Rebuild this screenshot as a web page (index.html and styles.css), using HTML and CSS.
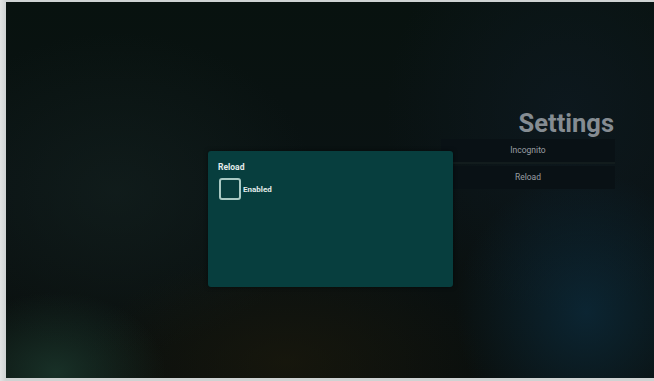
FILE: index.html
```html
<!DOCTYPE html>
<html>
<head>
<meta charset="utf-8">
<link rel="stylesheet" href="styles.css">
</head>
<body>
<div class="frame">
  <div class="screen">
    <div class="settings">
      <div class="title">Settings</div>
      <div class="row first">Incognito</div>
      <div class="row">Reload</div>
    </div>
    <div class="dialog">
      <div class="dlg-title">Reload</div>
      <label class="option">
        <span class="check"></span>
        <span class="opt-label">Enabled</span>
      </label>
    </div>
  </div>
</div>
</body>
</html>
```
FILE: styles.css
```css
html, body {
  margin: 0;
  padding: 0;
  width: 654px;
  height: 381px;
  overflow: hidden;
  background: #d9dcdc;
  font-family: Roboto, "Liberation Sans", sans-serif;
}
.frame {
  width: 654px;
  height: 381px;
  box-sizing: border-box;
  padding: 2px 0 3px 6px;
  background: linear-gradient(90deg, #e2e4e4 0, #cfd3d3 6px);
}
.screen {
  position: relative;
  width: 648px;
  height: 376px;
  display: flex;
  justify-content: flex-end;
  background:
    radial-gradient(ellipse 110px 80px at 50px 370px, rgba(30,62,50,0.7), rgba(30,62,50,0) 100%),
    radial-gradient(ellipse 130px 140px at 580px 310px, rgba(12,44,62,0.75), rgba(12,44,62,0) 100%),
    radial-gradient(ellipse 200px 110px at 280px 360px, rgba(32,28,12,0.55), rgba(32,28,12,0) 100%),
    radial-gradient(ellipse 200px 160px at 110px 190px, rgba(20,34,32,0.6), rgba(20,34,32,0) 100%),
    radial-gradient(ellipse 180px 200px at 560px 110px, rgba(14,26,34,0.75), rgba(14,26,34,0) 100%),
    linear-gradient(180deg, #08120f 0%, #0a1213 50%, #0a0f0d 100%);
}
.settings {
  width: 174px;
  margin-right: 39px;
  padding-top: 107px;
  display: flex;
  flex-direction: column;
}
.title {
  text-align: right;
  font-size: 25.5px;
  font-weight: 700;
  color: #858c92;
  line-height: 29px;
  margin-right: 1px;
  margin-bottom: 1px;
}
.row {
  height: 23px;
  line-height: 23px;
  text-align: center;
  font-size: 8.5px;
  color: #9a9fa2;
  background: #091115;
}
.row.first {
  border-bottom: 2px solid #121c1d;
  margin-bottom: 2px;
}
.dialog {
  position: absolute;
  left: 202px;
  top: 149px;
  width: 245px;
  height: 136px;
  box-sizing: border-box;
  padding: 11px 10px;
  background: #073e3e;
  border-radius: 3px;
  box-shadow: 0 0 4px rgba(0,0,0,0.5);
}
.dlg-title {
  font-size: 8.5px;
  font-weight: 700;
  color: #e2ecea;
  line-height: 10px;
  margin-bottom: 6px;
}
.option {
  display: flex;
  align-items: center;
  gap: 2px;
  padding-left: 1px;
}
.check {
  width: 18px;
  height: 18px;
  border: 2px solid #a9c9c3;
  border-radius: 3px;
}
.opt-label {
  font-size: 8px;
  font-weight: 700;
  color: #e2ecea;
}
```
